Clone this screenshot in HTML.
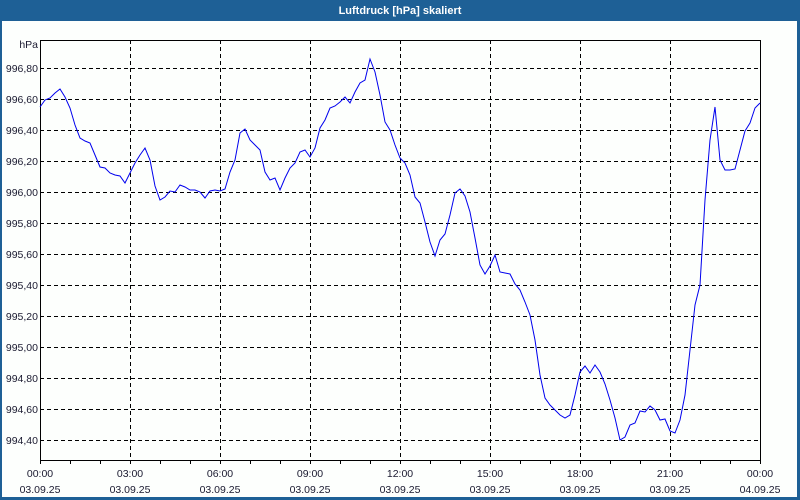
<!DOCTYPE html>
<html><head><meta charset="utf-8"><style>
html,body{margin:0;padding:0;width:800px;height:500px;overflow:hidden;background:#1e6096;}
svg{display:block}
text{font-family:"Liberation Sans",sans-serif;font-size:10.5px;fill:#1a1a30}
</style></head><body>
<svg width="800" height="500" viewBox="0 0 800 500">
<rect x="0" y="0" width="800" height="500" fill="#1e6096"/>
<text x="400" y="14" text-anchor="middle" style="fill:#fff;font-weight:bold;font-size:11px">Luftdruck [hPa] skaliert</text>
<rect x="2" y="21" width="795" height="476" fill="#fdfffd"/>
<g stroke="#000" stroke-width="1" stroke-dasharray="4,3" shape-rendering="crispEdges">
<line x1="40" x2="760" y1="68.5" y2="68.5"/><line x1="40" x2="760" y1="99.5" y2="99.5"/>
<line x1="40" x2="760" y1="130.5" y2="130.5"/><line x1="40" x2="760" y1="161.5" y2="161.5"/>
<line x1="40" x2="760" y1="192.5" y2="192.5"/><line x1="40" x2="760" y1="223.5" y2="223.5"/>
<line x1="40" x2="760" y1="254.5" y2="254.5"/><line x1="40" x2="760" y1="285.5" y2="285.5"/>
<line x1="40" x2="760" y1="316.5" y2="316.5"/><line x1="40" x2="760" y1="347.5" y2="347.5"/>
<line x1="40" x2="760" y1="378.5" y2="378.5"/><line x1="40" x2="760" y1="409.5" y2="409.5"/>
<line x1="40" x2="760" y1="440.5" y2="440.5"/>
<line y1="40" y2="460" x1="130.5" x2="130.5"/><line y1="40" y2="460" x1="220.5" x2="220.5"/>
<line y1="40" y2="460" x1="310.5" x2="310.5"/><line y1="40" y2="460" x1="400.5" x2="400.5"/>
<line y1="40" y2="460" x1="490.5" x2="490.5"/><line y1="40" y2="460" x1="580.5" x2="580.5"/>
<line y1="40" y2="460" x1="670.5" x2="670.5"/>
</g>
<rect x="40.5" y="40.5" width="720" height="420" fill="none" stroke="#000" shape-rendering="crispEdges"/>
<g stroke="#000" shape-rendering="crispEdges">
<line x1="70.5" x2="70.5" y1="460" y2="464"/><line x1="100.5" x2="100.5" y1="460" y2="464"/>
<line x1="130.5" x2="130.5" y1="460" y2="464"/><line x1="160.5" x2="160.5" y1="460" y2="464"/>
<line x1="190.5" x2="190.5" y1="460" y2="464"/><line x1="220.5" x2="220.5" y1="460" y2="464"/>
<line x1="250.5" x2="250.5" y1="460" y2="464"/><line x1="280.5" x2="280.5" y1="460" y2="464"/>
<line x1="310.5" x2="310.5" y1="460" y2="464"/><line x1="340.5" x2="340.5" y1="460" y2="464"/>
<line x1="370.5" x2="370.5" y1="460" y2="464"/><line x1="400.5" x2="400.5" y1="460" y2="464"/>
<line x1="430.5" x2="430.5" y1="460" y2="464"/><line x1="460.5" x2="460.5" y1="460" y2="464"/>
<line x1="490.5" x2="490.5" y1="460" y2="464"/><line x1="520.5" x2="520.5" y1="460" y2="464"/>
<line x1="550.5" x2="550.5" y1="460" y2="464"/><line x1="580.5" x2="580.5" y1="460" y2="464"/>
<line x1="610.5" x2="610.5" y1="460" y2="464"/><line x1="640.5" x2="640.5" y1="460" y2="464"/>
<line x1="670.5" x2="670.5" y1="460" y2="464"/><line x1="700.5" x2="700.5" y1="460" y2="464"/>
<line x1="730.5" x2="730.5" y1="460" y2="464"/><line x1="40.5" x2="40.5" y1="460" y2="464"/>
<line x1="760.5" x2="760.5" y1="460" y2="464"/>
</g>
<g text-anchor="end">
<text x="38" y="48">hPa</text>
<text x="38" y="72">996,80</text><text x="38" y="103">996,60</text><text x="38" y="134">996,40</text>
<text x="38" y="165">996,20</text><text x="38" y="196">996,00</text><text x="38" y="227">995,80</text>
<text x="38" y="258">995,60</text><text x="38" y="289">995,40</text><text x="38" y="320">995,20</text>
<text x="38" y="351">995,00</text><text x="38" y="382">994,80</text><text x="38" y="413">994,60</text>
<text x="38" y="444">994,40</text>
</g>
<g text-anchor="middle">
<text x="40" y="477">00:00</text><text x="40" y="493">03.09.25</text>
<text x="130" y="477">03:00</text><text x="130" y="493">03.09.25</text>
<text x="220" y="477">06:00</text><text x="220" y="493">03.09.25</text>
<text x="310" y="477">09:00</text><text x="310" y="493">03.09.25</text>
<text x="400" y="477">12:00</text><text x="400" y="493">03.09.25</text>
<text x="490" y="477">15:00</text><text x="490" y="493">03.09.25</text>
<text x="580" y="477">18:00</text><text x="580" y="493">03.09.25</text>
<text x="670" y="477">21:00</text><text x="670" y="493">03.09.25</text>
<text x="760" y="477">00:00</text><text x="760" y="493">04.09.25</text>
</g>
<polyline fill="none" stroke="#0000ee" stroke-width="1" points="40,107 45,100 50,98 55,93 60,89 65,97 70,108 75,125 80,138 85,141 90,143 95,155 100,167 105,168 110,173 115,175 120,176 125,183 130,173 135,163 140,155 145,148 150,160 155,186 160,200 165,197 170,191 175,192 180,185 185,187 190,190 195,190 200,192 205,198 210,191 215,190 220,191 225,189 230,172 235,160 240,133 245,129 250,140 255,145 260,150 265,172 270,180 275,178 280,190 285,178 290,168 295,163 300,152 305,150 310,157 315,148 320,128 325,120 330,108 335,106 340,102 345,97 350,103 355,92 360,83 365,80 370,59 375,72 380,95 385,122 390,130 395,145 400,158 405,163 410,175 415,197 420,203 425,222 430,242 435,256 440,240 445,234 450,215 455,193 460,189 465,196 470,212 475,238 480,265 485,274 490,266 495,255 500,272 505,273 510,274 515,284 520,290 525,302 530,315 535,340 540,375 545,398 550,405 555,410 560,415 565,418 570,415 575,395 580,372 585,366 590,373 595,365 600,372 605,384 610,400 615,418 620,440 625,437 630,425 635,423 640,411 645,412 650,406 655,410 660,420 665,419 670,431 675,433 680,420 685,395 690,350 695,305 700,285 705,200 710,140 715,107 720,160 725,170 730,170 735,169 740,150 745,131 750,123 755,108 760,103"/>
</svg>
</body></html>
